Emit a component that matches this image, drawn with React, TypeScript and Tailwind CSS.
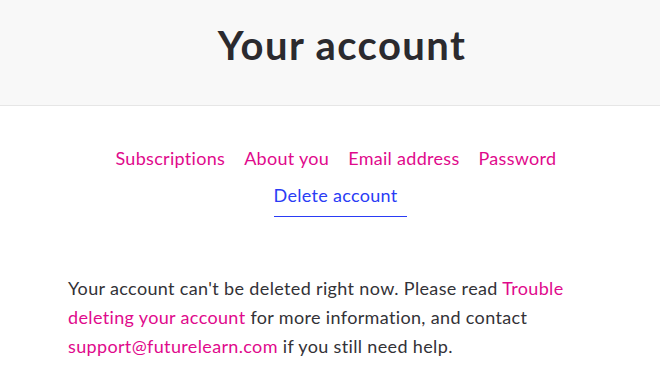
const tabs = ["Subscriptions", "About you", "Email address", "Password"];

export default function App() {
  return (
    <div className="min-h-screen bg-white font-['Lato','Noto_Sans',sans-serif] text-[#333237]">
      <header className="h-[106px] bg-[#f8f8f8] border-b border-[#e6e6e6] flex items-center justify-center">
        <h1 className="text-[40px] font-bold text-[#2b2a2e] tracking-[1.4px] mt-[-16px] ml-[24px]">Your account</h1>
      </header>

      <nav className="pt-[39px] flex flex-col items-center">
        <ul className="flex gap-[19px] pl-[12px] text-[18px] text-[#df0a8c] leading-[27px] tracking-[0.3px]">
          {tabs.map((t) => (
            <li key={t}>
              <a href="#">{t}</a>
            </li>
          ))}
        </ul>
        <a
          href="#"
          className="mt-[10px] ml-[21px] text-[18px] leading-[27px] tracking-[0.3px] text-[#2a3cf5] border-b border-[#2a3cf5] pb-[7px] pr-[10px]"
        >
          Delete account
        </a>
      </nav>

      <p className="mt-[57px] px-[68px] text-[18px] leading-[29px] tracking-[0.35px] text-[#333237]">
        Your account can't be deleted right now. Please read{" "}
        <a href="#" className="text-[#df0a8c]">Trouble deleting your account</a> for more information, and contact{" "}
        <a href="#" className="text-[#df0a8c]">support@futurelearn.com</a> if you still need help.
      </p>
    </div>
  );
}
